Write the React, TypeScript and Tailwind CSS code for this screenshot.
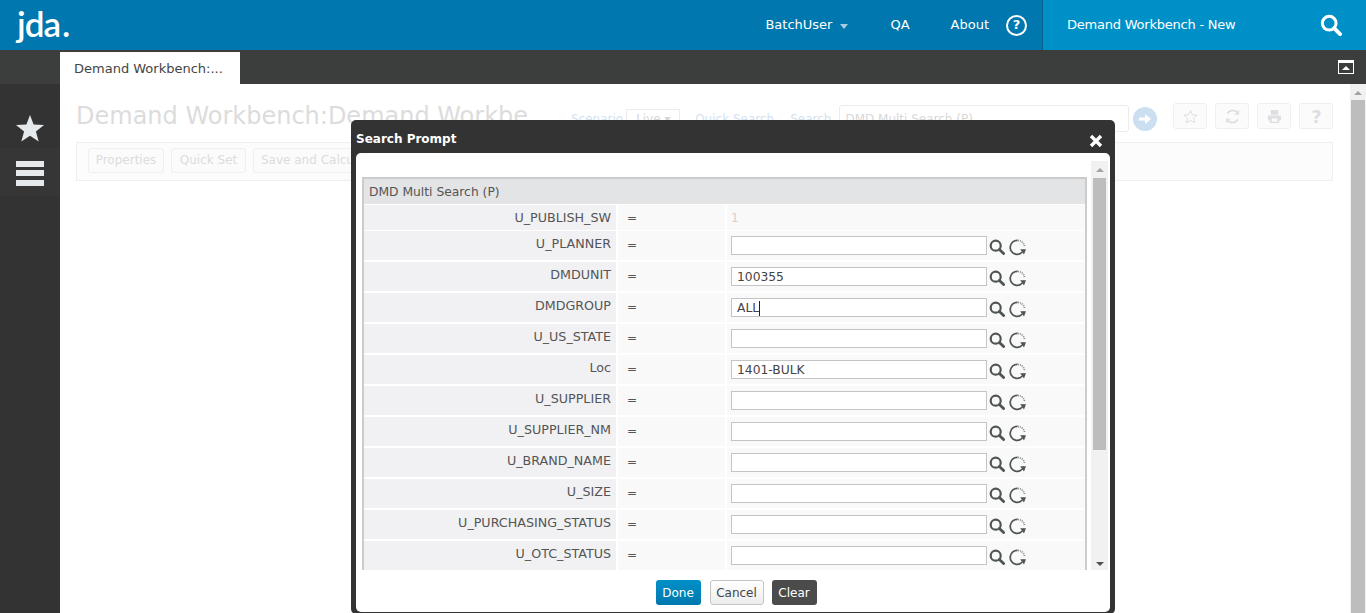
import React from "react";

const font = "font-['DejaVu_Sans','Liberation_Sans',sans-serif]";

function Glass({ className = "", color = "#4f5455", w = 16 }: { className?: string; color?: string; w?: number }) {
  return (
    <svg width={w} height={w} viewBox="0 0 16 16" className={`shrink-0 ${className}`} fill="none">
      <circle cx="6.7" cy="6.7" r="5" stroke={color} strokeWidth="2.2" />
      <path d="M10.4 10.4 L14.6 14.6" stroke={color} strokeWidth="2.8" strokeLinecap="round" />
    </svg>
  );
}

function Reset() {
  return (
    <svg width="17" height="17" viewBox="0 0 17 17" fill="none" className="shrink-0 ml-[2px] mt-[3px]">
      <path d="M8.6 1.4 A7 7 0 1 0 14.8 10.8" stroke="#4f5455" strokeWidth="1.7" />
      <path d="M9 1.4 A7 7 0 0 1 15.6 7.6" stroke="#8a8d8e" strokeWidth="1.8" strokeDasharray="1 1" />
      <path d="M11.2 10.2 L17 10.2 L15 15.4 Z" fill="#4f5455" />
    </svg>
  );
}

const rows: [string, string, boolean?][] = [
  ["U_PLANNER", ""],
  ["DMDUNIT", "100355"],
  ["DMDGROUP", "ALL", true],
  ["U_US_STATE", ""],
  ["Loc", "1401-BULK"],
  ["U_SUPPLIER", ""],
  ["U_SUPPLIER_NM", ""],
  ["U_BRAND_NAME", ""],
  ["U_SIZE", ""],
  ["U_PURCHASING_STATUS", ""],
  ["U_OTC_STATUS", ""],
];

function FadedBtn({ children, className = "" }: { children: React.ReactNode; className?: string }) {
  return (
    <div className={`border border-[#efefef] rounded-[3px] bg-[#fbfbfb] flex items-center justify-center ${className}`}>
      {children}
    </div>
  );
}

function Row({ label, value, caret, first }: { label: string; value: string; caret?: boolean; first?: boolean }) {
  return (
    <div className={`flex h-[29px] gap-[2px] shrink-0 ${first ? "mt-[1px]" : "mt-[2px]"}`}>
      <div className="w-[252px] bg-[#f1f1f3] flex justify-end pr-[5px] pb-[4px] items-center text-[12.7px] text-[#555]">{label}</div>
      <div className="w-[107px] bg-[#f9f9f9] pl-[9px] pb-[1px] flex items-center text-[12px] text-[#555]">=</div>
      <div className="flex-1 bg-[#f9f9f9] pl-[4px] flex items-center gap-[2px]">
        <div className="w-[256px] h-[19px] border border-[#c4c4c4] bg-white flex items-center pl-[5px] pt-[1px] text-[12.3px] text-[#444]">
          {value}
          {caret && <span className="w-px h-[15px] bg-[#222]" />}
        </div>
        <Glass className="mt-[2px]" />
        <Reset />
      </div>
    </div>
  );
}

export default function App() {
  return (
    <div className={`relative h-[613px] w-[1366px] overflow-hidden bg-white flex flex-col ${font}`}>
      {/* Top bar */}
      <header className="h-[50px] bg-[#0077ae] flex shrink-0 text-white text-[13px]">
        <div className="pl-[17px] w-[200px] font-['Lato',sans-serif] text-[35px] leading-[47px] font-semibold tracking-[-1px]">
          jda<span className="ml-[2px]">.</span>
        </div>
        <div className="flex-1 flex items-center justify-end pr-[15px]">
          <span>BatchUser</span>
          <span className="ml-[8px] mt-[3px] w-0 h-0 border-x-[4px] border-x-transparent border-t-[5px] border-t-[#a9cbe0]" />
          <span className="ml-[42px]">QA</span>
          <span className="ml-[41px]">About</span>
          <span className="ml-[17px] w-[21px] h-[21px] rounded-full border-2 border-white flex items-center justify-center text-[13px] font-bold">?</span>
        </div>
        <div className="w-[324px] bg-[#0090c8] border-l border-l-[#0a5f8c] flex items-center justify-between pl-[24px] pr-[24px]">
          <span className="tracking-[-0.22px]">Demand Workbench - New</span>
          <Glass color="#ffffff" w={22} />
        </div>
      </header>

      {/* Tab bar */}
      <div className="h-[34px] bg-[#3c3d3d] flex shrink-0 pl-[60px] pt-[2px] relative">
        <div className="w-[180px] bg-white text-[#444] text-[13px] pl-[14px] flex items-center pt-[1px]">Demand Workbench:...</div>
        <div className="ml-auto mr-[12px] mt-[8px] w-[16px] h-[14px] border border-white border-t-[3px] flex items-center justify-center">
          <span className="w-0 h-0 border-x-[4px] border-x-transparent border-b-[4px] border-b-white" />
        </div>
      </div>

      <div className="flex flex-1 min-h-0">
        {/* Sidebar */}
        <aside className="w-[60px] bg-[#333333] shrink-0 flex flex-col">
          <div className="h-[64px] flex items-center justify-center pt-[23px]">
            <svg width="30" height="28" viewBox="0 0 30 28"><path d="M15 1 L18.6 10.6 L29 11 L20.9 17.5 L23.7 27.5 L15 21.8 L6.3 27.5 L9.1 17.5 L1 11 L11.4 10.6 Z" fill="#e6e9ec" /></svg>
          </div>
          <div className="h-[48px] bg-[#363636] flex flex-col items-center pt-[13px] gap-[3px]">
            <span className="w-[28px] h-[6px] bg-[#e6e9ec]" />
            <span className="w-[28px] h-[6px] bg-[#e6e9ec]" />
            <span className="w-[28px] h-[6px] bg-[#e6e9ec] mt-[1px]" />
          </div>
        </aside>

        {/* Faded page */}
        <main className="flex-1 min-w-0 pl-[16px] pr-[17px] pt-[20px]">
          <div className="flex items-start">
            <div className="w-[455px] whitespace-nowrap text-[24px] leading-[24px] text-[#dcdcdc] shrink-0">Demand Workbench:Demand Workbe</div>
            <div className="flex items-center text-[12px] text-[#d3e2f0] ml-[40px] mt-[1px] h-[27px] whitespace-nowrap shrink-0">
              <span>Scenario</span>
              <div className="ml-[3px] w-[54px] h-[20px] border border-[#ececec] text-[#d8d8d8] pl-[9px] flex items-center">Live ▾</div>
              <span className="ml-[15px]">Quick Search</span>
              <span className="ml-[16px]">Search</span>
              <div className="ml-[8px] w-[290px] h-[27px] border border-[#ececec] rounded-[3px] text-[#d8d8d8] pl-[5px] flex items-center">DMD Multi Search (P)</div>
              <div className="ml-[4px] w-[24px] h-[24px] rounded-full bg-[#cbdff0] flex items-center justify-center">
                <svg width="14" height="12" viewBox="0 0 14 12"><path d="M1 4.5 H7 V1 L13 6 L7 11 V7.5 H1 Z" fill="#fff" /></svg>
              </div>
            </div>
            <div className="flex gap-[8px] ml-[16px] -mt-[1px] shrink-0">
              <FadedBtn className="w-[34px] h-[26px]">
                <svg width="15" height="15" viewBox="0 0 30 28"><path d="M15 2 L18.6 10.6 L28 11 L20.9 17.5 L23.7 26.5 L15 21.8 L6.3 26.5 L9.1 17.5 L2 11 L11.4 10.6 Z" fill="none" stroke="#dfdfe3" strokeWidth="2" /></svg>
              </FadedBtn>
              <FadedBtn className="w-[34px] h-[26px]">
                <svg width="15" height="15" viewBox="0 0 16 16" fill="none"><path d="M14 5 A6.5 6.5 0 0 0 2.5 5 M2 11 A6.5 6.5 0 0 0 13.5 11" stroke="#dfdfe3" strokeWidth="2" /><path d="M15 1 V6 H10 Z M1 15 V10 H6 Z" fill="#dfdfe3" /></svg>
              </FadedBtn>
              <FadedBtn className="w-[34px] h-[26px]">
                <svg width="15" height="15" viewBox="0 0 16 16"><path d="M4 1 H12 V6 H4 Z M1 7 H15 V12 H13 V15 H3 V12 H1 Z" fill="#dfdfe3" /><path d="M5 10 H11 V13.5 H5 Z" fill="#fbfbfb" /></svg>
              </FadedBtn>
              <FadedBtn className="w-[34px] h-[26px] text-[18px] font-bold text-[#dfdfe3]">?</FadedBtn>
            </div>
          </div>
          <div className="mt-[10px] h-[39px] border border-[#efefef] bg-[#fcfcfc] flex items-start gap-[7px] pl-[11px] pt-[5px] text-[12px] text-[#dcdcdc]">
            <FadedBtn className="w-[76px] h-[25px] pb-[2px]">Properties</FadedBtn>
            <FadedBtn className="w-[75px] h-[25px] pb-[2px]">Quick Set</FadedBtn>
            <FadedBtn className="h-[25px] pb-[2px] px-[7px] whitespace-nowrap">Save and Calculate</FadedBtn>
          </div>
        </main>

        {/* Page scrollbar */}
        <div className="w-[16px] bg-[#f1f1f1] shrink-0 flex flex-col items-center">
          <span className="mt-[7px] w-0 h-0 border-x-[4px] border-x-transparent border-b-[4px] border-b-[#a3a3a3]" />
          <div className="mt-[5px] w-[14px] flex-1 bg-[#bdbdbd]" />
        </div>
      </div>

      {/* Dialog */}
      <div className="absolute left-[351px] top-[120px] w-[764px] h-[494px] bg-[#333333] rounded-[5px] px-[5px] pb-[2px] flex flex-col">
        <div className="h-[33px] flex items-center justify-between shrink-0 pt-[4px]">
          <span className="text-[12px] font-bold text-white">Search Prompt</span>
          <svg width="14" height="14" viewBox="0 0 14 14" className="mr-[7px] mt-[4px]"><path d="M2 2 L12 12 M12 2 L2 12" stroke="#fff" strokeWidth="3.4" /></svg>
        </div>
        <div className="flex-1 bg-white rounded-[5px] flex flex-col min-h-0">
          <div className="h-[409px] mt-[8px] ml-[6px] mr-[2px] flex shrink-0 overflow-hidden">
            <div className="w-[725px] pt-[16px] shrink-0 overflow-hidden">
              <div className="border-2 border-b-0 border-[#cccccc] h-[600px] flex flex-col">
                <div className="h-[25px] bg-[#e3e4e6] text-[#555] text-[12.3px] pl-[5px] pt-[1px] flex items-center shrink-0">DMD Multi Search (P)</div>
                <div className="flex h-[25px] mt-[1px] gap-[2px] shrink-0">
                  <div className="w-[252px] bg-[#f1f1f3] flex justify-end pr-[5px] items-center text-[12.7px] text-[#555]">U_PUBLISH_SW</div>
                  <div className="w-[107px] bg-[#f9f9f9] pl-[9px] flex items-center text-[12px] text-[#555]">=</div>
                  <div className="flex-1 bg-[#f9f9f9] pl-[4px] flex items-center text-[12px] text-[#d8cfcb]">1</div>
                </div>
                {rows.map(([l, v, c], i) => (
                  <Row key={l} label={l} value={v} caret={c} first={i === 0} />
                ))}
              </div>
            </div>
            <div className="ml-[4px] w-[17px] bg-[#f1f1f1] flex flex-col items-center relative">
              <span className="mt-[7px] w-0 h-0 border-x-[4px] border-x-transparent border-b-[4px] border-b-[#a3a3a3]" />
              <div className="mt-[6px] w-[13px] h-[272px] bg-[#bdbdbd]" />
              <span className="absolute bottom-[4px] w-0 h-0 border-x-[4px] border-x-transparent border-t-[4px] border-t-[#505050]" />
            </div>
          </div>
          <div className="flex justify-center pt-[10px] pl-[6px] text-[12px]">
            <div className="w-[45px] h-[25px] rounded-[3px] bg-gradient-to-b from-[#0090c8] to-[#0077ae] text-white flex items-center justify-center">Done</div>
            <div className="ml-[9px] w-[54px] h-[25px] rounded-[3px] border border-[#c4c4c4] bg-gradient-to-b from-white to-[#eceded] text-[#444] flex items-center justify-center">Cancel</div>
            <div className="ml-[8px] w-[45px] h-[25px] rounded-[3px] bg-[#4b4b4b] text-white flex items-center justify-center">Clear</div>
          </div>
        </div>
      </div>
    </div>
  );
}
